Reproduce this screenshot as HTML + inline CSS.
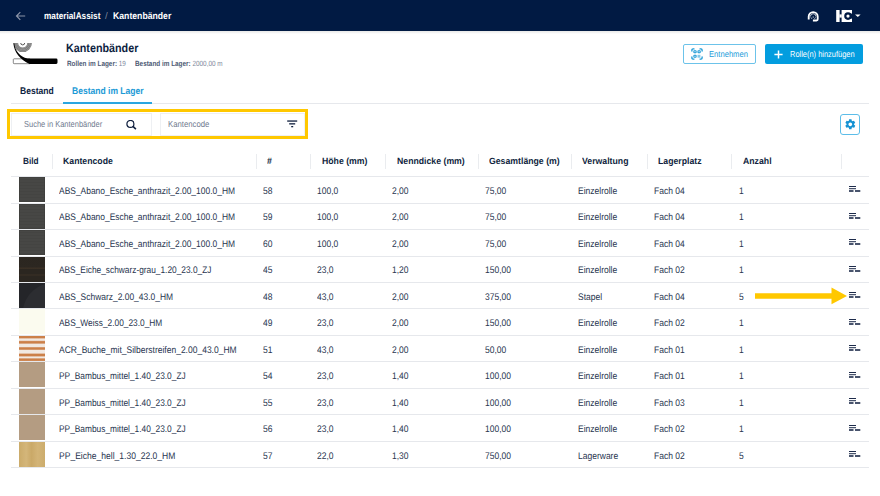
<!DOCTYPE html>
<html><head><meta charset="utf-8">
<style>
*{box-sizing:border-box;margin:0;padding:0}
html,body{width:880px;height:496px;overflow:hidden;background:#fff;font-family:"Liberation Sans",sans-serif;color:#2d3a55;text-rendering:geometricPrecision}
.a{position:absolute;white-space:nowrap}
#hdr{position:absolute;left:0;top:0;width:880px;height:31px;background:#011a43}
#shd{position:absolute;left:0;top:31px;width:880px;height:3px;background:linear-gradient(180deg,#e9e9e8 0,#efefee 35%,#fafafa 80%,#fff 100%)}
.crumb{font-weight:bold;color:#fff;font-size:9.7px;top:11.1px;line-height:12px;transform-origin:0 0}
.title{left:66px;top:40.5px;font-size:12px;font-weight:bold;color:#0d1e3f;line-height:14px;transform:scaleX(0.897);transform-origin:0 0}
.sub{top:58.7px;font-size:7.5px;color:#7d879a;line-height:9px;transform:scaleX(0.851);transform-origin:0 0}
.sub b{color:#4d5a73}
.btn{position:absolute;top:44px;height:20px;border-radius:2px;white-space:nowrap}
.bt{position:absolute;top:4px;font-size:8.7px;line-height:12px;white-space:nowrap;transform-origin:0 0}
.tab{top:85.9px;font-size:9.7px;font-weight:bold;line-height:12px;transform-origin:0 0}
.hline{position:absolute;height:1px;background:#e6e8ec}
.th{top:155.7px;font-size:9.1px;font-weight:bold;color:#0f1f3e;line-height:11px;transform:scaleX(0.958);transform-origin:0 0}
.sep{position:absolute;top:154px;width:1px;height:15px;background:#eaecef}
.row{position:absolute;left:11px;width:857px;height:25.5px}
.td{position:absolute;top:8.6px;font-size:9.6px;line-height:11px;color:#28354f;white-space:nowrap;transform:scaleX(0.886);transform-origin:0 0}
.thumb{position:absolute;left:8px;top:0;width:26px;height:25px}
.ph{font-size:8.7px;color:#6f7a8e;line-height:11px;transform-origin:0 0}
.ic{position:absolute;left:838.3px;top:9.5px}
.t1{background:repeating-linear-gradient(180deg,#474745 0,#474745 2px,#444442 2px,#444442 3px);box-shadow:inset 0 0 0 0.6px #3c3c3a}
.t2{background:linear-gradient(180deg,#2b2620 0,#2c2721 40%,#3d3226 45%,#2b2620 50%,#2b2620 68%,#3b3025 72%,#2b2620 76%,#2b2620 100%)}
.t3{background:radial-gradient(circle at 135% 125%,#2c2d31 0,#2c2d31 66%,#242529 68%,#242529 100%)}
.t4{background:#fbfbef}
.t5{background:linear-gradient(180deg,#f1e9e2 -1.0px,#cc8049 0.3px,#cc8049 1.7px,#f1e9e2 3.0px,#f1e9e2 4.3px,#cc8049 5.6px,#cc8049 7.0px,#f1e9e2 8.3px,#f1e9e2 10.5px,#cc8049 11.8px,#cc8049 13.2px,#f1e9e2 14.5px,#f1e9e2 17.0px,#cc8049 18.3px,#cc8049 19.7px,#f1e9e2 21.0px,#f1e9e2 21.7px,#cc8049 23.0px,#cc8049 24.4px,#f1e9e2 25.7px)}
.t6{background:#b49c82}
.t7{background:linear-gradient(90deg,#cbab6a,#d4b67a 28%,#caa968 48%,#d3b477 72%,#ccac6c)}
</style></head><body>
<div id="shd"></div>
<div id="hdr">
  <svg class="a" style="left:15px;top:11px" width="11" height="10" viewBox="0 0 11 10"><path d="M10.2 5H1.5M5.3 1.2L1.5 5L5.3 8.8" stroke="#8c94a8" stroke-width="1.2" fill="none"/></svg>
  <div class="a crumb" style="left:44.2px;transform:scaleX(0.852)">materialAssist</div>
  <div class="a crumb" style="left:105px;color:#7c859a;font-weight:normal;font-size:9.7px">/</div>
  <div class="a crumb" style="left:113.2px;transform:scaleX(0.895)">Kantenbänder</div>
  <!-- headset -->
  <svg class="a" style="left:806px;top:10px" width="15" height="13" viewBox="0 0 15 13">
    <path d="M2.7 9.6V6.6A4.5 4.5 0 0 1 11.7 6.6V9.3Q11.7 10.5 10.5 10.5H6.9" stroke="#fff" stroke-width="1.85" fill="none"/>
    <path d="M4.4 6.5A2.8 2.8 0 0 1 10 6.5" stroke="#fff" stroke-width="1" fill="none" opacity="0.8"/>
    <path d="M4.9 7.4L5.9 8.8M9.5 7.4L8.5 8.8M7.2 6.4V7.8" stroke="#fff" stroke-width="1" opacity="0.75"/>
  </svg>
  <!-- HC logo -->
  <svg class="a" style="left:836px;top:10px" width="26" height="12" viewBox="0 0 26 12">
    <rect x="0.2" y="0" width="3.4" height="12" fill="#fff"/>
    <rect x="3.4" y="4.4" width="2.4" height="3.2" fill="#fff"/>
    <rect x="5.6" y="0" width="10.4" height="12" fill="#fff"/>
    <circle cx="12" cy="6.1" r="3.8" fill="#011a43"/>
    <rect x="12" y="3.6" width="4.2" height="5" fill="#011a43"/>
    <circle cx="12" cy="6.1" r="1.6" fill="#fff"/>
    <path d="M19 4.4H24.6L21.8 7Z" fill="#fff"/>
  </svg>
</div>

<!-- page icon -->
<svg class="a" style="left:10px;top:38px" width="50" height="28" viewBox="10 38 50 28">
  <defs>
    <clipPath id="half"><rect x="10" y="42.9" width="26" height="12"/></clipPath>
  </defs>
  <g clip-path="url(#half)" fill="none">
    <circle cx="22.7" cy="42.9" r="6.9" stroke="#787878" stroke-width="4.6"/>
    <circle cx="22.7" cy="42.9" r="5.4" stroke="#a9a9a9" stroke-width="0.55"/>
    <circle cx="22.7" cy="42.9" r="6.9" stroke="#a9a9a9" stroke-width="0.55"/>
    <circle cx="22.7" cy="42.9" r="8.4" stroke="#a9a9a9" stroke-width="0.55"/>
    <circle cx="22.7" cy="42.9" r="2" stroke="#444" stroke-width="0.9"/>
  </g>
  <rect x="13.3" y="58.8" width="17" height="4.9" rx="0.8" fill="#fff" stroke="#6a6a6a" stroke-width="0.8"/>
  <path d="M13.4 43.2C14 52 20.5 60 29.5 63.9H56.2A1.3 1.3 0 0 0 57.5 62.6V59.9A1.3 1.3 0 0 0 56.2 58.6H27.5C20 56.5 15 51 14.3 43.2Z" fill="#000"/>
</svg>
<div class="a title">Kantenbänder</div>
<div class="a sub" style="left:67px"><b>Rollen im Lager:</b> 19</div>
<div class="a sub" style="left:135px"><b>Bestand im Lager:</b> 2000,00 m</div>

<div class="btn" style="left:683px;width:73px;border:1px solid #6cc3ea"><div class="bt" style="left:24.9px;top:3.4px;color:#1a9bd9;transform:scaleX(0.876)">Entnehmen</div></div>
<svg class="a" style="left:691px;top:48px" width="12" height="12" viewBox="0 0 12 12" fill="none" stroke="#1c9ad6" stroke-width="1.3" stroke-linecap="round">
  <path d="M0.9 3V2Q0.9 0.9 2 0.9H3M9 0.9H10Q11.1 0.9 11.1 2V3M11.1 9V10Q11.1 11.1 10 11.1H9M3 11.1H2Q0.9 11.1 0.9 10V9"/>
  <rect x="2.9" y="2.8" width="2.2" height="1.9" rx="0.5" stroke-width="1.1"/><rect x="7" y="2.8" width="2.2" height="1.9" rx="0.5" stroke-width="1.1"/><rect x="2.9" y="7.3" width="2.2" height="1.9" rx="0.5" stroke-width="1.1"/>
  <rect x="6.5" y="6.8" width="2.9" height="2.9" fill="#1c9ad6" opacity="0.55" stroke="none"/>
</svg>
<div class="btn" style="left:765px;width:98px;background:#039ddf"><div class="bt" style="left:24.8px;color:#fff;transform:scaleX(0.857)">Rolle(n) hinzufügen</div></div>
<svg class="a" style="left:774px;top:50px" width="9" height="9" viewBox="0 0 9 9"><path d="M4.5 0.4V8.4M0.4 4.4H8.6" stroke="#fff" stroke-width="1.5"/></svg>

<div class="a tab" style="left:20.2px;color:#0d1e3f;transform:scaleX(0.881)">Bestand</div>
<div class="a tab" style="left:71.6px;color:#1c9ad6;transform:scaleX(0.881)">Bestand im Lager</div>
<div class="hline" style="left:11px;top:103px;width:858px"></div>
<div class="a" style="left:62.5px;top:102px;width:89.5px;height:2px;background:#2aa6df"></div>

<div class="a" style="left:7px;top:109px;width:301px;height:30px;border:3px solid #ffc800"></div>
<div class="a" style="left:11px;top:113px;width:141px;height:23px;border:1px solid #eef0f3"></div>
<div class="a" style="left:160px;top:113px;width:145px;height:23px;border:1px solid #eef0f3"></div>
<div class="a ph" style="left:24.3px;top:119.1px;transform:scaleX(0.861)">Suche in Kantenbänder</div>
<div class="a ph" style="left:167.6px;top:119.1px;transform:scaleX(0.893)">Kantencode</div>
<svg class="a" style="left:126px;top:119.5px" width="11" height="10" viewBox="0 0 11 10"><circle cx="4.4" cy="3.9" r="3.5" fill="none" stroke="#0f1f3e" stroke-width="1.2"/><path d="M6.7 6.2L9.9 9.2" stroke="#0f1f3e" stroke-width="1.6"/></svg>
<svg class="a" style="left:287px;top:120px" width="11" height="8" viewBox="0 0 11 8"><rect x="0.2" y="0.4" width="10" height="1.3" fill="#0f1f3e"/><rect x="2.2" y="3.2" width="6" height="1.3" fill="#0f1f3e"/><rect x="4.2" y="6" width="2" height="1.3" fill="#0f1f3e"/></svg>

<div class="a" style="left:840px;top:114px;width:20px;height:21px;border:1px solid #5cbde9;border-radius:3px"></div>
<svg class="a" style="left:844.1px;top:118.3px" width="12.6" height="12.6" viewBox="0 0 24 24"><path fill="#1592d3" d="M19.14 12.94c.04-.3.06-.61.06-.94 0-.32-.02-.64-.07-.94l2.03-1.58a.49.49 0 0 0 .12-.61l-1.92-3.32a.488.488 0 0 0-.59-.22l-2.39.96c-.5-.38-1.03-.7-1.62-.94l-.36-2.54a.484.484 0 0 0-.48-.41h-3.84c-.24 0-.43.17-.47.41l-.36 2.54c-.59.24-1.13.57-1.62.94l-2.39-.96c-.22-.08-.47 0-.59.22L2.74 8.87c-.12.21-.08.47.12.61l2.03 1.58c-.05.3-.09.63-.09.94s.02.64.07.94l-2.03 1.58a.49.49 0 0 0-.12.61l1.92 3.32c.12.22.37.29.59.22l2.39-.96c.5.38 1.030.7 1.62.94l.36 2.54c.05.24.24.41.48.41h3.84c.24 0 .44-.17.47-.41l.36-2.54c.59-.24 1.13-.56 1.62-.94l2.39.96c.22.08.47 0 .59-.22l1.92-3.32c.12-.22.07-.47-.12-.61l-2.01-1.58zM12 15.6c-1.98 0-3.6-1.62-3.6-3.6s1.62-3.6 3.6-3.6 3.6 1.62 3.6 3.6-1.62 3.6-3.6 3.6z"/></svg>

<div class="a th" style="left:22.9px;transform:scaleX(0.91)">Bild</div>
<div class="a th" style="left:63.1px">Kantencode</div>
<div class="a th" style="left:267px">#</div>
<div class="a th" style="left:321.5px">Höhe (mm)</div>
<div class="a th" style="left:397px">Nenndicke (mm)</div>
<div class="a th" style="left:489px">Gesamtlänge (m)</div>
<div class="a th" style="left:582px">Verwaltung</div>
<div class="a th" style="left:658px">Lagerplatz</div>
<div class="a th" style="left:743px">Anzahl</div>
<div class="sep" style="left:52px"></div>
<div class="sep" style="left:256px"></div>
<div class="sep" style="left:310px"></div>
<div class="sep" style="left:385px"></div>
<div class="sep" style="left:478px"></div>
<div class="sep" style="left:571px"></div>
<div class="sep" style="left:647px"></div>
<div class="sep" style="left:731px"></div>
<div class="sep" style="left:841px"></div>
<div class="hline" style="left:11px;top:176px;width:858px"></div>

<!--ROWS-->
<div class="row" style="top:177px"><div class="thumb t1"></div><div class="td" style="left:47.9px;top:8.60px;transform:scaleX(0.88)">ABS_Abano_Esche_anthrazit_2.00_100.0_HM</div><div class="td" style="left:252.2px;top:8.60px">58</div><div class="td" style="left:306.4px;top:8.60px">100,0</div><div class="td" style="left:380.9px;top:8.60px">2,00</div><div class="td" style="left:474.0px;top:8.60px">75,00</div><div class="td" style="left:567.0px;top:8.60px">Einzelrolle</div><div class="td" style="left:643.3px;top:8.60px">Fach 04</div><div class="td" style="left:728.4px;top:8.60px">1</div><svg class="ic" style="top:9.40px" width="12" height="6" viewBox="0 0 12 6"><rect x="0" y="0" width="7" height="1" fill="#1d2b4a"/><rect x="0" y="2.2" width="7" height="1" fill="#1d2b4a"/><rect x="0" y="4.2" width="4.5" height="1.6" fill="#1d2b4a"/><rect x="6" y="4.2" width="5.3" height="1.6" fill="#1d2b4a"/></svg></div>
<div class="hline" style="left:11px;top:203px;width:858px"></div>
<div class="row" style="top:204px"><div class="thumb t1"></div><div class="td" style="left:47.9px;top:8.10px;transform:scaleX(0.88)">ABS_Abano_Esche_anthrazit_2.00_100.0_HM</div><div class="td" style="left:252.2px;top:8.10px">59</div><div class="td" style="left:306.4px;top:8.10px">100,0</div><div class="td" style="left:380.9px;top:8.10px">2,00</div><div class="td" style="left:474.0px;top:8.10px">75,00</div><div class="td" style="left:567.0px;top:8.10px">Einzelrolle</div><div class="td" style="left:643.3px;top:8.10px">Fach 04</div><div class="td" style="left:728.4px;top:8.10px">1</div><svg class="ic" style="top:8.90px" width="12" height="6" viewBox="0 0 12 6"><rect x="0" y="0" width="7" height="1" fill="#1d2b4a"/><rect x="0" y="2.2" width="7" height="1" fill="#1d2b4a"/><rect x="0" y="4.2" width="4.5" height="1.6" fill="#1d2b4a"/><rect x="6" y="4.2" width="5.3" height="1.6" fill="#1d2b4a"/></svg></div>
<div class="hline" style="left:11px;top:229px;width:858px"></div>
<div class="row" style="top:230px"><div class="thumb t1"></div><div class="td" style="left:47.9px;top:8.60px;transform:scaleX(0.88)">ABS_Abano_Esche_anthrazit_2.00_100.0_HM</div><div class="td" style="left:252.2px;top:8.60px">60</div><div class="td" style="left:306.4px;top:8.60px">100,0</div><div class="td" style="left:380.9px;top:8.60px">2,00</div><div class="td" style="left:474.0px;top:8.60px">75,00</div><div class="td" style="left:567.0px;top:8.60px">Einzelrolle</div><div class="td" style="left:643.3px;top:8.60px">Fach 04</div><div class="td" style="left:728.4px;top:8.60px">1</div><svg class="ic" style="top:9.40px" width="12" height="6" viewBox="0 0 12 6"><rect x="0" y="0" width="7" height="1" fill="#1d2b4a"/><rect x="0" y="2.2" width="7" height="1" fill="#1d2b4a"/><rect x="0" y="4.2" width="4.5" height="1.6" fill="#1d2b4a"/><rect x="6" y="4.2" width="5.3" height="1.6" fill="#1d2b4a"/></svg></div>
<div class="hline" style="left:11px;top:256px;width:858px"></div>
<div class="row" style="top:257px"><div class="thumb t2"></div><div class="td" style="left:47.9px;top:8.10px;transform:scaleX(0.869)">ABS_Eiche_schwarz-grau_1.20_23.0_ZJ</div><div class="td" style="left:252.2px;top:8.10px">45</div><div class="td" style="left:306.4px;top:8.10px">23,0</div><div class="td" style="left:380.9px;top:8.10px">1,20</div><div class="td" style="left:474.0px;top:8.10px">150,00</div><div class="td" style="left:567.0px;top:8.10px">Einzelrolle</div><div class="td" style="left:643.3px;top:8.10px">Fach 02</div><div class="td" style="left:728.4px;top:8.10px">1</div><svg class="ic" style="top:8.90px" width="12" height="6" viewBox="0 0 12 6"><rect x="0" y="0" width="7" height="1" fill="#1d2b4a"/><rect x="0" y="2.2" width="7" height="1" fill="#1d2b4a"/><rect x="0" y="4.2" width="4.5" height="1.6" fill="#1d2b4a"/><rect x="6" y="4.2" width="5.3" height="1.6" fill="#1d2b4a"/></svg></div>
<div class="hline" style="left:11px;top:282px;width:858px"></div>
<div class="row" style="top:283px"><div class="thumb t3"></div><div class="td" style="left:47.9px;top:8.60px;transform:scaleX(0.88)">ABS_Schwarz_2.00_43.0_HM</div><div class="td" style="left:252.2px;top:8.60px">48</div><div class="td" style="left:306.4px;top:8.60px">43,0</div><div class="td" style="left:380.9px;top:8.60px">2,00</div><div class="td" style="left:474.0px;top:8.60px">375,00</div><div class="td" style="left:567.0px;top:8.60px">Stapel</div><div class="td" style="left:643.3px;top:8.60px">Fach 04</div><div class="td" style="left:728.4px;top:8.60px">5</div><svg class="ic" style="top:9.40px" width="12" height="6" viewBox="0 0 12 6"><rect x="0" y="0" width="7" height="1" fill="#1d2b4a"/><rect x="0" y="2.2" width="7" height="1" fill="#1d2b4a"/><rect x="0" y="4.2" width="4.5" height="1.6" fill="#1d2b4a"/><rect x="6" y="4.2" width="5.3" height="1.6" fill="#1d2b4a"/></svg></div>
<div class="hline" style="left:11px;top:308px;width:858px"></div>
<div class="row" style="top:309px"><div class="thumb t4"></div><div class="td" style="left:47.9px;top:9.10px;transform:scaleX(0.87)">ABS_Weiss_2.00_23.0_HM</div><div class="td" style="left:252.2px;top:9.10px">49</div><div class="td" style="left:306.4px;top:9.10px">23,0</div><div class="td" style="left:380.9px;top:9.10px">2,00</div><div class="td" style="left:474.0px;top:9.10px">150,00</div><div class="td" style="left:567.0px;top:9.10px">Einzelrolle</div><div class="td" style="left:643.3px;top:9.10px">Fach 02</div><div class="td" style="left:728.4px;top:9.10px">1</div><svg class="ic" style="top:9.90px" width="12" height="6" viewBox="0 0 12 6"><rect x="0" y="0" width="7" height="1" fill="#1d2b4a"/><rect x="0" y="2.2" width="7" height="1" fill="#1d2b4a"/><rect x="0" y="4.2" width="4.5" height="1.6" fill="#1d2b4a"/><rect x="6" y="4.2" width="5.3" height="1.6" fill="#1d2b4a"/></svg></div>
<div class="hline" style="left:11px;top:335px;width:858px"></div>
<div class="row" style="top:336px"><div class="thumb t5"></div><div class="td" style="left:47.9px;top:8.60px;transform:scaleX(0.886)">ACR_Buche_mit_Silberstreifen_2.00_43.0_HM</div><div class="td" style="left:252.2px;top:8.60px">51</div><div class="td" style="left:306.4px;top:8.60px">43,0</div><div class="td" style="left:380.9px;top:8.60px">2,00</div><div class="td" style="left:474.0px;top:8.60px">50,00</div><div class="td" style="left:567.0px;top:8.60px">Einzelrolle</div><div class="td" style="left:643.3px;top:8.60px">Fach 01</div><div class="td" style="left:728.4px;top:8.60px">1</div><svg class="ic" style="top:9.40px" width="12" height="6" viewBox="0 0 12 6"><rect x="0" y="0" width="7" height="1" fill="#1d2b4a"/><rect x="0" y="2.2" width="7" height="1" fill="#1d2b4a"/><rect x="0" y="4.2" width="4.5" height="1.6" fill="#1d2b4a"/><rect x="6" y="4.2" width="5.3" height="1.6" fill="#1d2b4a"/></svg></div>
<div class="hline" style="left:11px;top:361px;width:858px"></div>
<div class="row" style="top:362px"><div class="thumb t6"></div><div class="td" style="left:47.9px;top:9.10px;transform:scaleX(0.87)">PP_Bambus_mittel_1.40_23.0_ZJ</div><div class="td" style="left:252.2px;top:9.10px">54</div><div class="td" style="left:306.4px;top:9.10px">23,0</div><div class="td" style="left:380.9px;top:9.10px">1,40</div><div class="td" style="left:474.0px;top:9.10px">100,00</div><div class="td" style="left:567.0px;top:9.10px">Einzelrolle</div><div class="td" style="left:643.3px;top:9.10px">Fach 01</div><div class="td" style="left:728.4px;top:9.10px">1</div><svg class="ic" style="top:9.90px" width="12" height="6" viewBox="0 0 12 6"><rect x="0" y="0" width="7" height="1" fill="#1d2b4a"/><rect x="0" y="2.2" width="7" height="1" fill="#1d2b4a"/><rect x="0" y="4.2" width="4.5" height="1.6" fill="#1d2b4a"/><rect x="6" y="4.2" width="5.3" height="1.6" fill="#1d2b4a"/></svg></div>
<div class="hline" style="left:11px;top:388px;width:858px"></div>
<div class="row" style="top:389px"><div class="thumb t6"></div><div class="td" style="left:47.9px;top:8.60px;transform:scaleX(0.87)">PP_Bambus_mittel_1.40_23.0_ZJ</div><div class="td" style="left:252.2px;top:8.60px">55</div><div class="td" style="left:306.4px;top:8.60px">23,0</div><div class="td" style="left:380.9px;top:8.60px">1,40</div><div class="td" style="left:474.0px;top:8.60px">100,00</div><div class="td" style="left:567.0px;top:8.60px">Einzelrolle</div><div class="td" style="left:643.3px;top:8.60px">Fach 03</div><div class="td" style="left:728.4px;top:8.60px">1</div><svg class="ic" style="top:9.40px" width="12" height="6" viewBox="0 0 12 6"><rect x="0" y="0" width="7" height="1" fill="#1d2b4a"/><rect x="0" y="2.2" width="7" height="1" fill="#1d2b4a"/><rect x="0" y="4.2" width="4.5" height="1.6" fill="#1d2b4a"/><rect x="6" y="4.2" width="5.3" height="1.6" fill="#1d2b4a"/></svg></div>
<div class="hline" style="left:11px;top:414px;width:858px"></div>
<div class="row" style="top:415px"><div class="thumb t6"></div><div class="td" style="left:47.9px;top:9.10px;transform:scaleX(0.87)">PP_Bambus_mittel_1.40_23.0_ZJ</div><div class="td" style="left:252.2px;top:9.10px">56</div><div class="td" style="left:306.4px;top:9.10px">23,0</div><div class="td" style="left:380.9px;top:9.10px">1,40</div><div class="td" style="left:474.0px;top:9.10px">100,00</div><div class="td" style="left:567.0px;top:9.10px">Einzelrolle</div><div class="td" style="left:643.3px;top:9.10px">Fach 02</div><div class="td" style="left:728.4px;top:9.10px">1</div><svg class="ic" style="top:9.90px" width="12" height="6" viewBox="0 0 12 6"><rect x="0" y="0" width="7" height="1" fill="#1d2b4a"/><rect x="0" y="2.2" width="7" height="1" fill="#1d2b4a"/><rect x="0" y="4.2" width="4.5" height="1.6" fill="#1d2b4a"/><rect x="6" y="4.2" width="5.3" height="1.6" fill="#1d2b4a"/></svg></div>
<div class="hline" style="left:11px;top:441px;width:858px"></div>
<div class="row" style="top:442px"><div class="thumb t7"></div><div class="td" style="left:47.9px;top:8.60px;transform:scaleX(0.89)">PP_Eiche_hell_1.30_22.0_HM</div><div class="td" style="left:252.2px;top:8.60px">57</div><div class="td" style="left:306.4px;top:8.60px">22,0</div><div class="td" style="left:380.9px;top:8.60px">1,30</div><div class="td" style="left:474.0px;top:8.60px">750,00</div><div class="td" style="left:567.0px;top:8.60px">Lagerware</div><div class="td" style="left:643.3px;top:8.60px">Fach 02</div><div class="td" style="left:728.4px;top:8.60px">5</div><svg class="ic" style="top:9.40px" width="12" height="6" viewBox="0 0 12 6"><rect x="0" y="0" width="7" height="1" fill="#1d2b4a"/><rect x="0" y="2.2" width="7" height="1" fill="#1d2b4a"/><rect x="0" y="4.2" width="4.5" height="1.6" fill="#1d2b4a"/><rect x="6" y="4.2" width="5.3" height="1.6" fill="#1d2b4a"/></svg></div>
<div class="hline" style="left:11px;top:467px;width:858px"></div>
<!--/ROWS-->

<!-- arrow -->
<svg class="a" style="left:754px;top:287px" width="94" height="18" viewBox="754 287 94 18"><path d="M755 293.2H831.5V287.6L847 296L831.5 304.3V298.8H755Z" fill="#ffc800"/></svg>
</body></html>
